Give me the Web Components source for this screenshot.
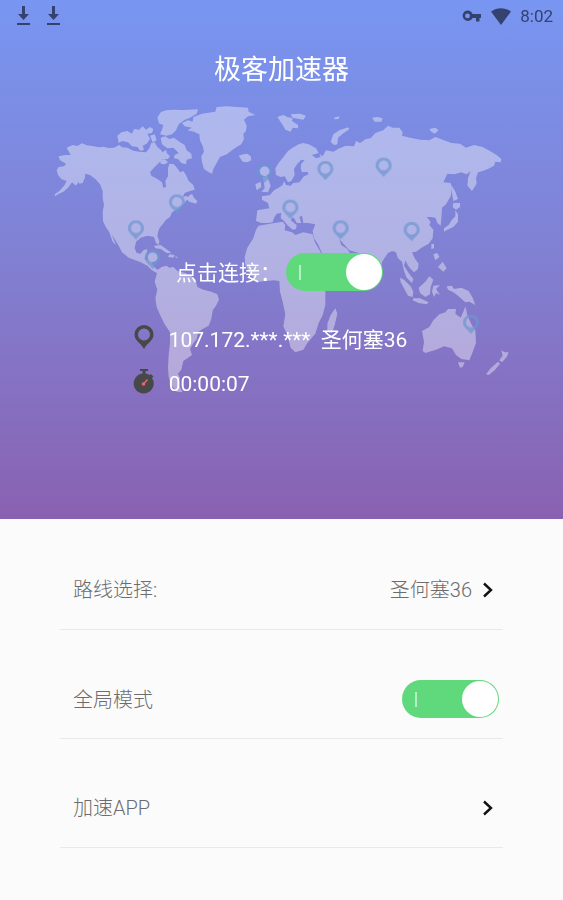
<!DOCTYPE html>
<html lang="zh-CN">
<head>
<meta charset="utf-8">
<meta name="viewport" content="width=device-width, initial-scale=1">
<title>极客加速器</title>
<style>
  body {
    margin: 0;
    min-height: 100vh;
    background: #fbfbfb;
    font-family: Roboto, "Noto Sans CJK SC", sans-serif;
  }
</style>
</head>
<body>
<vpn-app></vpn-app>

<template id="app">
  <style>
    :host { display: block; }
    .hero {
      display: grid;
      min-height: 519px;
      background: linear-gradient(#7896f2, #8180d2 50%, #8a61b1);
      color: #fff;
    }
    .hero > * { grid-area: 1 / 1; min-width: 0; }
    world-map { margin: 95px 33px 0 40px; }
    .content { position: relative; display: flex; flex-direction: column; }
    h1 {
      margin: 18px 0 0;
      font-size: 27px;
      line-height: 40px;
      font-weight: 400;
      text-align: center;
    }
    .connect { display: flex; justify-content: center; margin: 163px 4px 0 0; }
    .info {
      display: grid;
      row-gap: 12px;
      margin: 33px auto 0;
      padding-right: 24px;
    }
    main { padding: 2px 60px 0; }
  </style>
  <header class="hero">
    <world-map></world-map>
    <div class="content">
      <status-bar>8:02</status-bar>
      <h1>极客加速器</h1>
      <div class="connect"><toggle-switch>点击连接：</toggle-switch></div>
      <div class="info">
        <info-line icon="pin">107.172.***.***&nbsp; 圣何塞36</info-line>
        <info-line icon="timer">00:00:07</info-line>
      </div>
    </div>
  </header>
  <main>
    <link-row>路线选择:<span slot="value">圣何塞36</span></link-row>
    <switch-row>全局模式</switch-row>
    <link-row>加速APP</link-row>
  </main>
</template>

<template id="status">
  <style>
    :host {
      display: flex;
      align-items: center;
      height: 32px;
      padding: 0 10px 0 16px;
      color: #34426f;
      font-size: 17px;
      line-height: 20px;
    }
    svg { display: block; fill: currentColor; }
    .left { display: flex; gap: 15px; margin-right: auto; }
    .right { display: flex; align-items: center; gap: 9px; }
  </style>
  <div class="left">
    <svg width="15" height="20" viewBox="0 0 15 20"><path d="M6 0h3v8h4l-5.500 6L2 8h4zM1 17h13v2H1z"/></svg>
    <svg width="15" height="20" viewBox="0 0 15 20"><path d="M6 0h3v8h4l-5.500 6L2 8h4zM1 17h13v2H1z"/></svg>
  </div>
  <div class="right">
    <svg width="20" height="12" viewBox="0 0 20 12"><path fill-rule="evenodd" d="M5.500 .5a5.200 5.200 0 0 1 5 3.500H19v4h-1.500v3.500H14V8h-3.500a5.200 5.200 0 1 1-5-7.500zm0 3a2.400 2.400 0 1 0 0 4.800 2.400 2.400 0 0 0 0-4.800z"/></svg>
    <svg width="20" height="17" viewBox="0 0 20 17"><path d="M0 3.500C6-1 14-1 20 3.500L10 17z"/></svg>
    <span><slot></slot></span>
  </div>
</template>

<template id="map">
  <style>
    :host { display: block; }
    svg { display: block; width: 100%; }
    .land { fill: #fff; opacity: .39; }
    .pins { fill: #6f96d0; opacity: .72; }
  </style>
  <svg viewBox="0 0 1470 930" aria-hidden="true">
    <defs>
      <path id="p" fill-rule="evenodd" d="M0-24C-14-24-24-14-24 0C-24 14-8 22 0 34C8 22 24 14 24 0C24-14 14-24 0-24zM0-16A15 15 0 1 1 0 14A15 15 0 1 1 0-16z"/>
    </defs>
    <g class="land">
      <!-- North and Central America -->
      <path d="M80 158L98 150L112 153L126 145L140 151L158 153L176 157L190 155L206 159L222 158L238 150L246 157L262 158L280 167L298 170L318 172L328 160L334 144L344 142L352 156L362 164L368 172L378 164L380 174L390 184L384 192L368 192L360 200L344 216L330 232L334 242L352 252L366 262L370 278L378 276L376 258L384 244L384 220L388 206L402 208L412 220L420 232L430 228L438 240L446 258L460 270L464 284L450 288L434 294L428 306L440 302L442 312L432 326L420 336L410 344L396 352L390 366L378 374L368 388L358 400L354 412L352 424L358 438L356 450L348 444L342 426L322 422L302 428L288 440L284 460L290 474L302 476L310 466L322 462L320 480L314 492L334 498L340 514L352 524L368 516L366 526L350 534L336 526L322 512L302 502L286 496L266 488L246 472L238 456L226 436L214 416L222 436L228 450L218 440L208 412L196 394L189 378L188 350L192 330L188 310L188 288L180 268L166 252L150 240L136 236L134 250L128 264L118 266L116 260L108 272L96 262L84 278L70 290L54 298L46 304L44 298L58 288L74 270L80 258L64 252L54 240L50 226L56 216L72 214L78 206L60 196L56 184L76 180L92 180Z"/>
      <path d="M352 68L362 52L378 46L400 44L430 45L474 43L470 56L450 68L434 74L416 88L408 106L396 118L380 122L360 118L366 104L370 90L358 86Z"/>
      <path d="M232 122L244 112L262 108L276 116L282 102L298 104L308 94L318 104L330 96L340 102L336 114L322 116L330 132L320 146L308 152L312 164L302 168L292 156L276 154L264 142L246 138L236 144Z"/>
      <path d="M362 128L376 124L388 132L402 128L418 140L434 150L440 166L454 176L456 190L440 194L438 208L424 204L414 192L402 190L404 180L416 174L400 158L382 160L366 148ZM360 196L374 192L384 202L374 208L362 206ZM330 122L344 118L350 136L338 142ZM436 310L456 296L462 308L472 318L468 326L448 320Z"/>
      <path d="M342 452L362 450L382 464L394 474L380 474L362 462L346 460ZM388 478L404 480L400 488L384 486ZM404 484L414 486L410 490Z"/>
      <!-- Greenland and Iceland -->
      <path d="M426 84L444 76L458 80L460 66L486 56L526 50L530 36L560 34L590 36L624 38L626 50L646 60L624 64L612 74L620 92L618 108L610 116L612 132L604 148L590 156L576 166L560 178L540 186L530 204L520 222L516 236L504 230L492 222L486 202L484 184L492 170L488 152L480 136L478 118L462 110L442 106L456 98L434 94Z"/>
      <path d="M596 182L610 178L622 176L632 184L634 196L622 202L608 200Z"/>
      <!-- South America -->
      <path d="M352 530L364 516L380 512L388 518L400 516L412 528L436 534L452 542L466 552L472 576L490 584L514 590L532 598L537 614L528 632L518 646L514 672L506 692L488 702L474 712L470 732L458 748L450 762L456 780L442 790L430 798L424 824L414 836L420 850L414 864L424 884L428 892L410 890L394 870L386 846L384 820L386 780L390 744L390 712L374 688L362 664L350 636L346 610L352 584L344 560Z"/>
      <!-- Europe and Asia -->
      <path d="M706 220L716 204L732 184L744 168L758 158L776 148L790 144L806 148L828 160L836 174L828 176L816 180L828 190L842 186L838 176L848 184L858 166L880 170L898 160L918 152L942 154L948 138L960 144L978 132L992 130L1006 114L1030 106L1044 92L1058 98L1078 98L1088 112L1086 122L1110 128L1140 134L1168 136L1186 126L1212 136L1234 144L1260 146L1278 158L1302 150L1328 156L1350 168L1370 180L1384 192L1382 202L1366 200L1362 212L1344 222L1328 228L1314 232L1308 250L1310 266L1296 288L1282 272L1284 250L1292 228L1280 238L1264 232L1244 238L1222 236L1210 262L1232 264L1236 278L1232 304L1218 328L1206 338L1204 370L1202 392L1192 384L1186 368L1172 366L1160 366L1172 380L1168 390L1180 404L1178 430L1166 446L1148 456L1128 470L1116 472L1124 490L1136 506L1134 522L1122 532L1110 520L1102 508L1096 496L1092 512L1106 534L1120 552L1116 564L1100 548L1092 528L1086 500L1074 490L1068 472L1056 468L1044 474L1034 488L1026 502L1020 530L1010 548L996 530L984 500L976 482L956 474L928 466L908 444L898 432L904 450L922 462L932 478L912 496L880 506L862 500L846 474L834 448L822 430L818 408L826 388L804 384L790 384L786 362L778 366L784 384L770 384L764 372L758 366L752 376L770 390L768 402L758 404L744 392L730 376L722 370L724 354L710 356L702 368L698 382L684 384L664 384L648 378L652 346L688 340L684 324L666 314L666 304L690 300L702 286L716 278L728 270L732 258L738 270L752 272L760 264L778 262L792 244L806 238L802 230L786 232L782 220L784 206L794 196L784 194L772 206L762 222L764 240L754 258L744 262L734 244L722 246L708 240Z"/>
      <!-- British Isles and Arctic islands -->
      <path d="M668 246L680 242L686 256L692 272L684 292L664 290L674 280L672 264ZM646 268L662 260L664 276L650 286ZM712 66L730 60L742 66L758 70L756 78L774 90L774 100L758 98L752 110L736 104L728 90ZM752 58L780 56L798 62L790 74L758 68ZM882 68L898 64L896 72L884 73ZM996 68L1012 66L1028 70L1024 80L1004 80ZM1168 102L1186 98L1196 106L1184 116L1174 110ZM872 140L880 118L898 106L924 97L928 103L908 116L894 128L892 148L882 150Z"/>
      <!-- Africa and Madagascar -->
      <path d="M656 392L690 386L728 380L736 390L734 406L756 412L766 420L790 412L818 418L824 440L838 464L852 490L870 510L896 512L888 534L866 566L856 588L856 630L848 660L836 684L826 716L802 744L790 764L766 772L752 758L742 720L730 694L736 658L728 620L720 590L718 558L700 556L680 558L654 560L632 540L616 510L614 486L622 458L640 430L648 404ZM886 640L892 656L884 690L876 714L862 712L862 686L872 660Z"/>
      <!-- Japan, Sakhalin and the Pacific islands -->
      <path d="M1234 270L1246 290L1254 312L1240 318L1236 296ZM1240 324L1260 324L1260 336L1248 344L1238 336ZM1246 346L1254 358L1254 380L1240 396L1222 404L1212 410L1212 400L1226 390L1236 374L1246 364Z"/>
      <path d="M1174 448L1182 446L1182 460L1174 462ZM1180 478L1192 474L1198 486L1186 496ZM1194 516L1208 500L1220 520L1210 530Z"/>
      <path d="M1080 548L1092 554L1112 574L1120 590L1118 606L1104 602L1092 580L1082 562ZM1120 610L1140 610L1166 622L1160 628L1136 624L1118 616ZM1136 578L1156 560L1168 544L1180 554L1172 576L1170 598L1156 606L1140 594ZM1180 572L1200 570L1188 582L1200 600L1188 594L1182 606L1176 590Z"/>
      <path d="M1220 574L1236 572L1242 582L1264 578L1286 588L1298 608L1306 630L1288 620L1276 622L1254 602L1240 592L1224 584Z"/>
      <!-- Australia and New Zealand -->
      <path d="M1146 708L1168 696L1180 676L1198 658L1216 652L1224 642L1248 642L1246 656L1262 668L1270 650L1276 634L1282 660L1294 688L1306 706L1308 744L1296 776L1288 796L1264 792L1248 780L1236 760L1212 754L1188 764L1156 774L1148 768L1152 740ZM1254 802L1274 802L1268 816L1260 818ZM1384 766L1394 772L1406 772L1400 786L1386 802L1378 796L1388 782ZM1374 800L1380 806L1364 826L1346 840L1338 838L1352 820Z"/>
      <!-- Light centres of the pins that stand on the coast or at sea -->
      <circle cx="674" cy="229" r="15"/>
      <circle cx="338" cy="487" r="15"/>
    </g>
    <g class="pins">
      <use href="#p" x="411" y="322"/><use href="#p" x="288" y="400"/><use href="#p" x="338" y="488"/>
      <use href="#p" x="674" y="230"/><use href="#p" x="856" y="222"/><use href="#p" x="1031" y="212"/>
      <use href="#p" x="751" y="338"/><use href="#p" x="902" y="400"/><use href="#p" x="1115" y="405"/>
      <use href="#p" x="1293" y="683"/>
    </g>
  </svg>
</template>

<template id="toggle">
  <style>
    :host { display: block; }
    label {
      display: flex;
      align-items: center;
      justify-content: space-between;
      font-size: 21px;
      line-height: 30px;
    }
    :host([plain]) label { font-size: inherit; }
    input {
      appearance: none;
      position: relative;
      flex: none;
      width: 97px;
      height: 38px;
      margin: 0 0 0 5px;
      border-radius: 19px;
      background: #c8c8c8;
    }
    input:checked { background: #5fd97b; }
    input::before {
      content: "";
      position: absolute;
      left: 13px;
      top: 12px;
      width: 2px;
      height: 15px;
      background: #b5f0c2;
    }
    input::after {
      content: "";
      position: absolute;
      left: 1px;
      top: 1px;
      width: 36px;
      height: 36px;
      border-radius: 50%;
      background: #fff;
    }
    input:checked::after { left: auto; right: 1px; }
    span { padding-top: 2px; }
  </style>
  <label><span><slot></slot></span><input type="checkbox" role="switch" checked></label>
</template>

<template id="info">
  <style>
    :host {
      display: grid;
      grid-template-columns: 24px auto;
      column-gap: 13px;
      align-items: center;
      justify-content: start;
      font-size: 21px;
      line-height: 31px;
    }
    svg { display: none; margin-bottom: 6px; }
    :host([icon="pin"]) .pin, :host([icon="timer"]) .timer { display: block; }
  </style>
  <svg class="pin" width="24" height="26" viewBox="0 0 24 26"><path fill="#484848" fill-rule="evenodd" d="M12 1a9.500 9.500 0 0 0-9.500 9.500C2.500 17 9 19 12 25C15 19 21.500 17 21.500 10.500A9.500 9.500 0 0 0 12 1zm0 3.500a6 6 0 1 1 0 12 6 6 0 0 1 0-12z"/></svg>
  <svg class="timer" width="24" height="26" viewBox="0 0 24 26"><path fill="#484848" d="M8 1h8v2h-2.500v2.600a10 10 0 0 1 4 1.600L18.700 6 21.500 8.500 20 10a10 10 0 1 1-9.500-4.400V3H8z"/><path d="M11.500 16L15.500 11.500" stroke="#ea6470" stroke-width="1.500"/><circle cx="11.500" cy="16" r="1.800" fill="#ea6470"/></svg>
  <span><slot></slot></span>
</template>

<template id="link-row">
  <style>
    :host { display: block; border-bottom: 1px solid #e9e9eb; }
    button {
      display: flex;
      align-items: center;
      box-sizing: border-box;
      width: 100%;
      min-height: 108px;
      margin: 0;
      padding: 30px 9px 0 13px;
      border: 0;
      background: none;
      color: #6c6c6c;
      font: inherit;
      font-size: 20px;
      line-height: 30px;
      font-weight: 300;
      text-align: left;
    }
    .label { margin-right: auto; }
    svg { display: block; margin-left: 10px; }
  </style>
  <button type="button">
    <span class="label"><slot></slot></span>
    <slot name="value"></slot>
    <svg width="12" height="18" viewBox="0 0 12 18"><path d="M2 2.500L9 9L2 15.500" fill="none" stroke="#111" stroke-width="2.400"/></svg>
  </button>
</template>

<template id="switch-row">
  <style>
    :host {
      display: grid;
      align-items: center;
      box-sizing: border-box;
      min-height: 109px;
      padding: 29px 4px 0 13px;
      border-bottom: 1px solid #e9e9eb;
      color: #6c6c6c;
      font-size: 20px;
      font-weight: 300;
    }
  </style>
  <toggle-switch plain><slot></slot></toggle-switch>
</template>

<script>
  const define = (name, templateId) => customElements.define(name, class extends HTMLElement {
    constructor() {
      super();
      this.attachShadow({ mode: "open" })
        .append(document.getElementById(templateId).content.cloneNode(true));
    }
  });
  define("world-map", "map");
  define("status-bar", "status");
  define("toggle-switch", "toggle");
  define("info-line", "info");
  define("link-row", "link-row");
  define("switch-row", "switch-row");
  define("vpn-app", "app");
</script>
</body>
</html>
